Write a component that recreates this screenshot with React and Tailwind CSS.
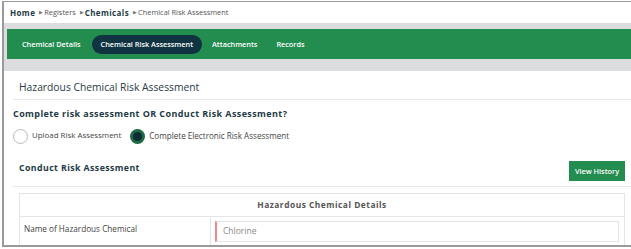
export default function App() {
  return (
    <div className="w-[631px] h-[249px] bg-white overflow-hidden pt-[1px] pl-[2px] font-['Open_Sans',sans-serif]">
      <div className="h-[246px] border-t border-l-2 border-b-2 border-[#9a9a9a] overflow-hidden">
        {/* breadcrumb */}
        <div className="h-[21px] bg-white flex items-center pl-[6px] text-[7.4px] text-[#555]">
          <span className="font-bold text-[#1d3a45] tracking-[0.4px] text-[8px]">Home</span>
          <span className="ml-[4px] text-[5px] text-[#777]">▶</span>
          <span className="ml-[1px]">Registers</span>
          <span className="ml-[4px] text-[5px] text-[#777]">▶</span>
          <span className="ml-[1px] font-bold text-[#1d3a45] tracking-[0.4px] text-[8px]">Chemicals</span>
          <span className="ml-[4px] text-[5px] text-[#777]">▶</span>
          <span className="ml-[1px]">Chemical Risk Assessment</span>
        </div>

        {/* tab bar */}
        <div className="bg-[#dcdddf] pt-[6px] pb-[12px] pl-[3px]">
          <div className="h-[30px] bg-[#238c4f] flex items-center pl-[15px] text-[7.3px] font-semibold text-white">
            <span>Chemical Details</span>
            <span className="ml-[11px] bg-[#0f3340] rounded-full px-[9px] h-[19px] flex items-center">Chemical Risk Assessment</span>
            <span className="ml-[10px]">Attachments</span>
            <span className="ml-[19px]">Records</span>
          </div>
        </div>

        {/* panel */}
        <div className="bg-white pl-[9px]">
          <div className="border-b border-[#e6e9ea] h-[29px] flex items-center pt-[6px] pl-[6px] text-[10.3px] text-[#2b3a42]">
            Hazardous Chemical Risk Assessment
          </div>
          <div className="mt-[7px] text-[9px] font-bold text-[#1d3a45] tracking-[0.4px] leading-[14px]">
            Complete risk assessment OR Conduct Risk Assessment?
          </div>
          <div className="mt-[7px] flex items-center text-[7.9px] text-[#444] h-[16px]">
            <span className="w-[15px] h-[15px] rounded-full border border-[#bbb] bg-white"></span>
            <span className="ml-[4px]">Upload Risk Assessment</span>
            <span className="ml-[9px] w-[15px] h-[15px] rounded-full bg-[#1f6a45] flex items-center justify-center">
              <span className="w-[9px] h-[9px] rounded-full bg-[#0c2c36]"></span>
            </span>
            <span className="ml-[4px] text-[8.1px]">Complete Electronic Risk Assessment</span>
          </div>
          <div className="mt-[17px] border-b border-[#e6e9ea] pb-[5px] pl-[6px] pr-[6px] flex items-start justify-between">
            <span className="mt-[2px] text-[8.8px] leading-[10px] font-bold text-[#1d3a45] tracking-[0.4px]">Conduct Risk Assessment</span>
            <span className="bg-[#238c4f] text-white text-[7.3px] font-semibold h-[20px] w-[56px] flex items-center justify-center">View History</span>
          </div>
          <div className="mt-[6px] ml-[6px] mr-[6px] border border-[#e3e6e8]">
            <div className="h-[23px] border-b border-[#e3e6e8] flex items-center justify-center text-[8.4px] font-bold text-[#555] tracking-[0.5px]">
              Hazardous Chemical Details
            </div>
            <div className="flex h-[40px]">
              <div className="w-[191px] border-r border-[#e3e6e8] pl-[4px] pt-[6px] text-[8.2px] text-[#444]">
                Name of Hazardous Chemical
              </div>
              <div className="flex-1 pl-[4px] pr-[5px] pt-[4px]">
                <div className="h-[21px] border border-[#e3e6e8] border-l-2 border-l-[#f08a8a] flex items-center pl-[6px] text-[8.5px] text-[#888]">
                  Chlorine
                </div>
              </div>
            </div>
          </div>
        </div>
      </div>
    </div>
  );
}
